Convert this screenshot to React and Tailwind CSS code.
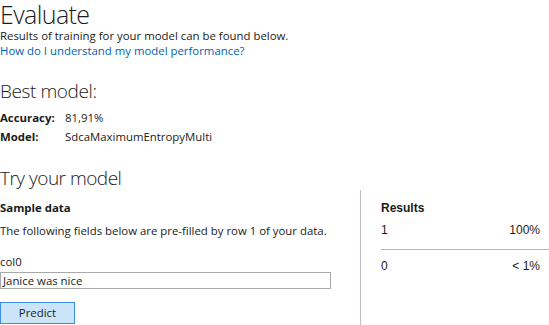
export default function App() {
  return (
    <div className="w-[549px] h-[325px] overflow-hidden bg-white text-[#1b1b1b] font-['Open_Sans',sans-serif]">
      <h1 className="text-[25px] leading-[28px] h-[28px] tracking-[-0.6px] font-light">Evaluate</h1>
      <p className="text-[11.4px] leading-[15px]">Results of training for your model can be found below.</p>
      <a className="block text-[11.4px] leading-[15px] text-[#0063b1]">How do I understand my model performance?</a>

      <h2 className="text-[19px] leading-[24px] mt-[21px] font-light tracking-[-0.4px]">Best model:</h2>
      <div className="mt-[5px] text-[11.4px] leading-[19px]">
        <div className="flex">
          <span className="w-[65px] font-bold">Accuracy:</span>
          <span>81,91%</span>
        </div>
        <div className="flex">
          <span className="w-[65px] font-bold">Model:</span>
          <span>SdcaMaximumEntropyMulti</span>
        </div>
      </div>

      <h2 className="text-[19px] leading-[24px] mt-[20px] font-light tracking-[-0.5px]">Try your model</h2>

      <div className="flex">
        <div className="w-[361px] border-r border-[#bcc0c8] h-[200px]">
          <div className="text-[11.4px] font-bold leading-[16px] mt-[10px]">Sample data</div>
          <div className="text-[11.4px] leading-[16px] mt-[7px]">The following fields below are pre-filled by row 1 of your data.</div>
          <div className="text-[11.4px] leading-[16px] mt-[15px]">col0</div>
          <div className="w-[331px] h-[17px] border border-[#a9a9a9] text-[11.4px] leading-[15px] px-[2px] mt-[2px]">Janice was nice</div>
          <button className="w-[75px] h-[22px] bg-[#cce4f7] border border-[#3d8ee6] text-[11.4px] leading-[20px] mt-[13px] block text-center">
            Predict
          </button>
        </div>
        <div className="flex-1 pl-[20px] font-['Liberation_Sans',sans-serif] text-[12px]">
          <div className="font-bold leading-[16px] mt-[10px]">Results</div>
          <div className="flex justify-between pr-[9px] leading-[16px] mt-[6px]">
            <span>1</span>
            <span>100%</span>
          </div>
          <div className="border-t border-[#b5b7bd] mt-[11px]" />
          <div className="flex justify-between pr-[9px] leading-[16px] mt-[8px]">
            <span>0</span>
            <span>&lt; 1%</span>
          </div>
        </div>
      </div>
    </div>
  )
}
